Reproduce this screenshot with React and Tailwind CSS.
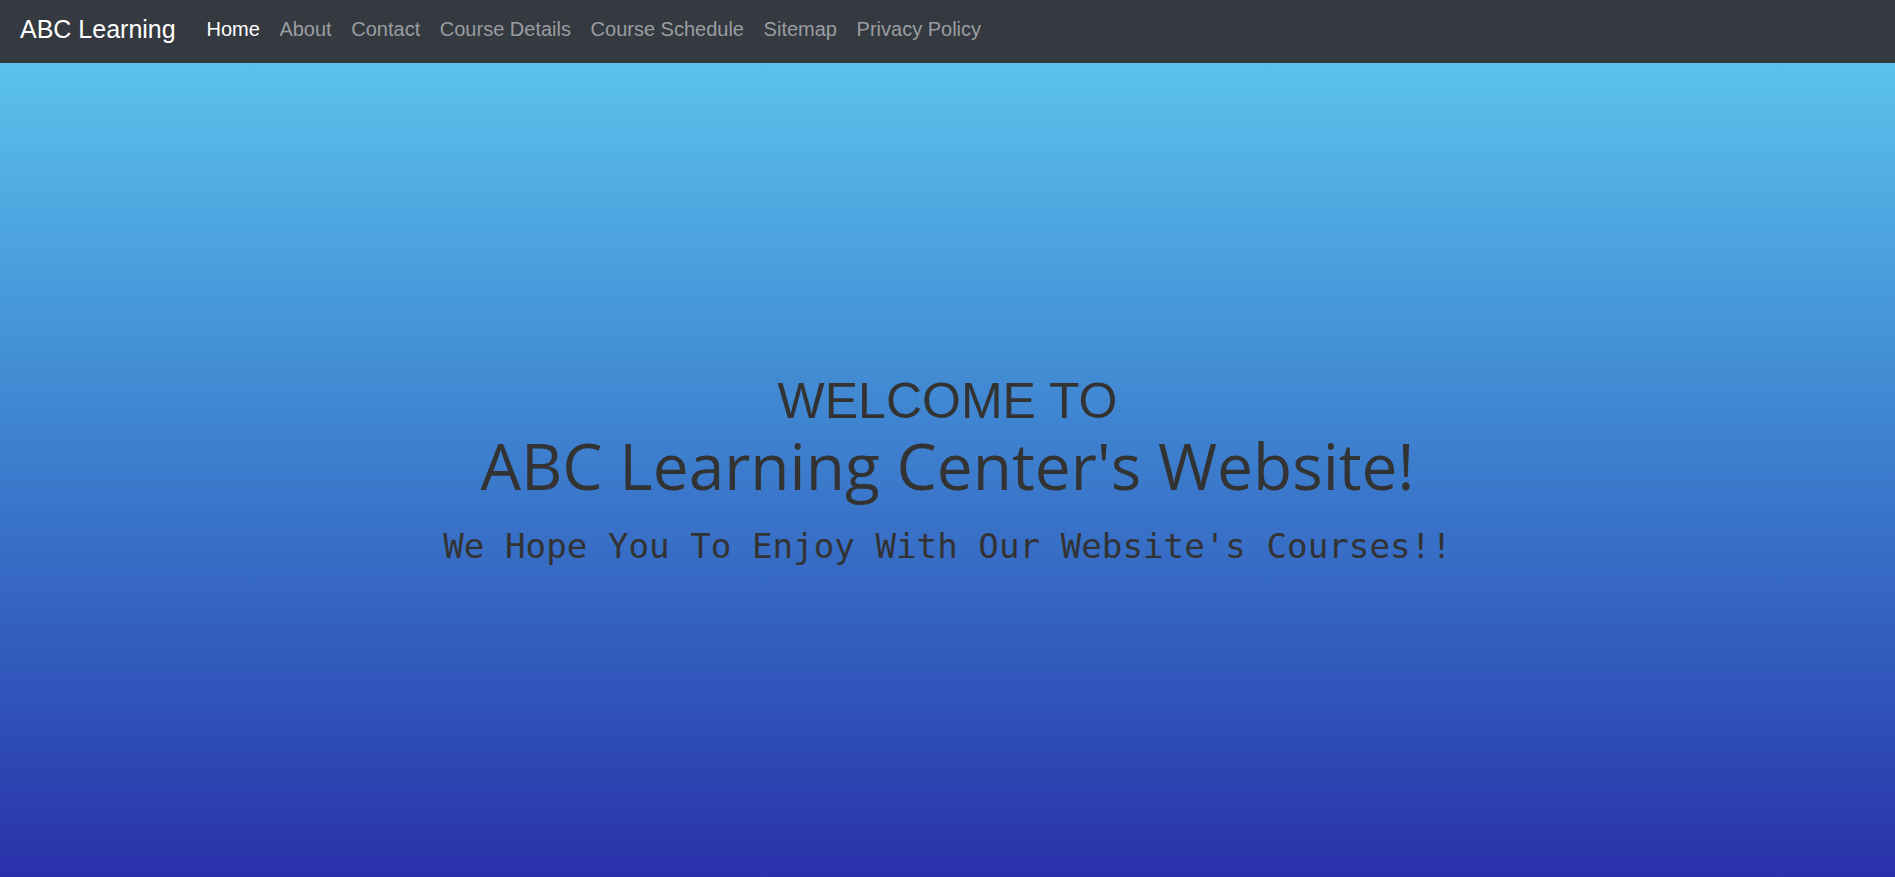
const links = [
  { label: "Home", active: true },
  { label: "About" },
  { label: "Contact" },
  { label: "Course Details" },
  { label: "Course Schedule" },
  { label: "Sitemap" },
  { label: "Privacy Policy" },
];

function Navbar() {
  return (
    <nav className="h-[63px] bg-[#343a40] flex items-center px-[20px] pb-[5px] font-['Liberation_Sans',Arial,sans-serif]">
      <a href="#" className="text-[25px] text-white mr-[21px] leading-none">
        ABC Learning
      </a>
      <ul className="flex items-center">
        {links.map((link) => (
          <li key={link.label}>
            <a
              href="#"
              className={`block px-[9.8px] text-[20px] leading-none ${
                link.active ? "text-white" : "text-[#9a9da0]"
              }`}
            >
              {link.label}
            </a>
          </li>
        ))}
      </ul>
    </nav>
  );
}

export default function App() {
  return (
    <div className="min-h-screen flex flex-col">
      <Navbar />
      <main className="h-[814px] bg-gradient-to-b from-[#5bc2ec] to-[#2a30aa] flex flex-col items-center justify-center text-[#333] text-center">
        <h1 className="text-[50px] leading-[58px] font-['Liberation_Sans',Arial,sans-serif]">
          WELCOME TO
        </h1>
        <h2 className="text-[64px] leading-[72px] font-medium font-['Comic_Sans_MS','Open_Sans',sans-serif]">
          ABC Learning Center's Website!
        </h2>
        <p className="mt-[22px] text-[34.2px] leading-[44px] font-['DejaVu_Sans_Mono',monospace]">
          We Hope You To Enjoy With Our Website's Courses!!
        </p>
      </main>
    </div>
  );
}
